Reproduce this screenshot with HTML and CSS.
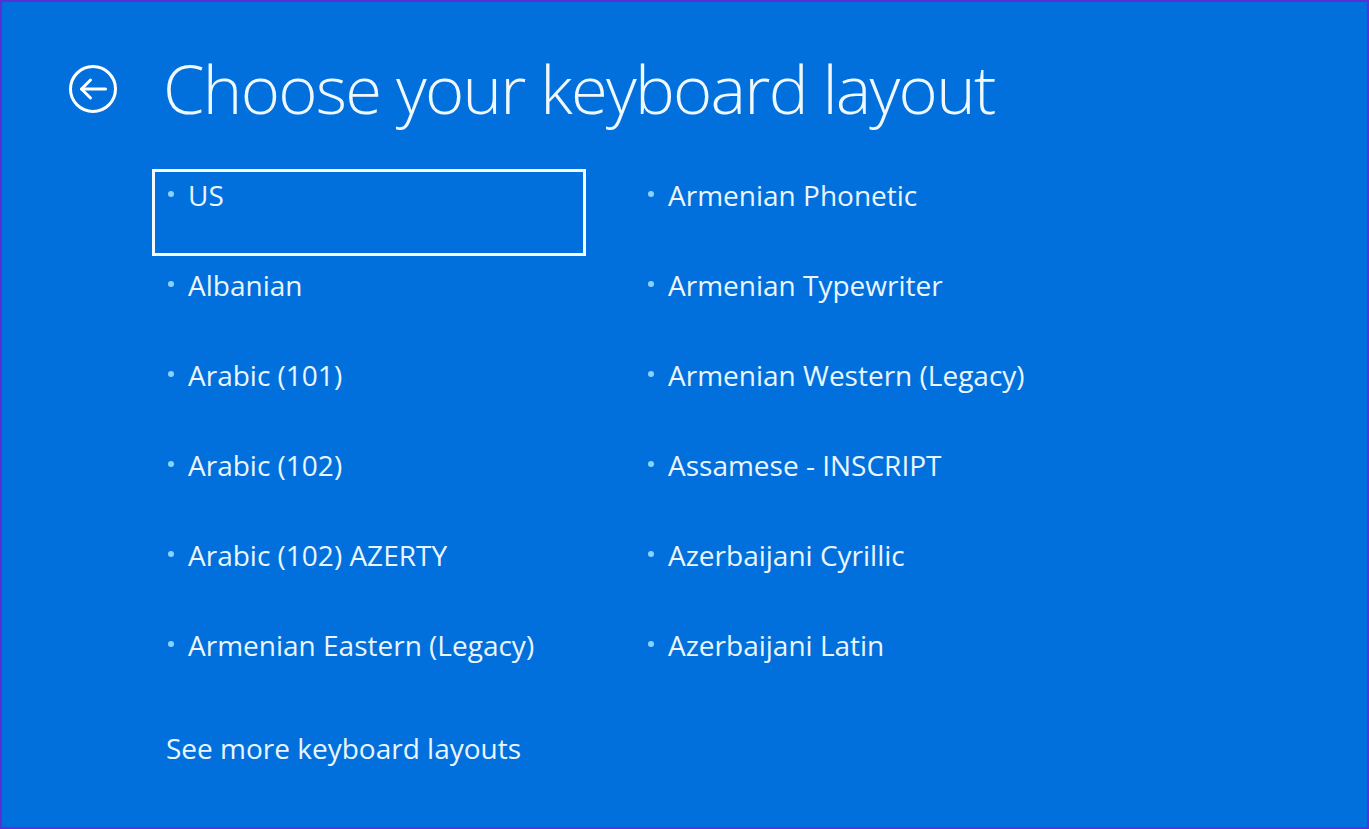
FILE: index.html
```html
<!DOCTYPE html>
<html lang="en">
<head>
<meta charset="utf-8">
<title>Choose your keyboard layout</title>
<link rel="stylesheet" href="styles.css">
</head>
<body>
<div class="screen">
  <header class="header">
    <button class="back" aria-label="Back">
      <svg width="50" height="50" viewBox="0 0 50 50" fill="none" stroke="#ffffff" stroke-width="3" stroke-linecap="round" stroke-linejoin="round">
        <circle cx="25" cy="25" r="22.5"/>
        <path d="M13.5 25 H37.5"/>
        <path d="M22.5 16 L13.5 25 L22.5 34"/>
      </svg>
    </button>
    <h1 class="title">Choose your keyboard layout</h1>
  </header>
  <ul class="layouts">
    <li class="item selected"><span class="dot"></span>US</li>
    <li class="item"><span class="dot"></span>Armenian Phonetic</li>
    <li class="item"><span class="dot"></span>Albanian</li>
    <li class="item"><span class="dot"></span>Armenian Typewriter</li>
    <li class="item"><span class="dot"></span>Arabic (101)</li>
    <li class="item"><span class="dot"></span>Armenian Western (Legacy)</li>
    <li class="item"><span class="dot"></span>Arabic (102)</li>
    <li class="item"><span class="dot"></span>Assamese - INSCRIPT</li>
    <li class="item"><span class="dot"></span>Arabic (102) AZERTY</li>
    <li class="item"><span class="dot"></span>Azerbaijani Cyrillic</li>
    <li class="item"><span class="dot"></span>Armenian Eastern (Legacy)</li>
    <li class="item"><span class="dot"></span>Azerbaijani Latin</li>
  </ul>
  <a class="more" href="#">See more keyboard layouts</a>
</div>
</body>
</html>
```

FILE: styles.css
```css
* { box-sizing: border-box; }
html, body {
  margin: 0;
  padding: 0;
  background: #5a2fd6;
}
.screen {
  width: 1369px;
  height: 829px;
  border-top: 2px solid #5a2fd6;
  border-left: 2px solid #5a2fd6;
  border-right: 2px solid #6a28d8;
  border-bottom: 2px solid #6a28d8;
  background: #0170dc;
  font-family: "Open Sans", "Noto Sans", sans-serif;
  color: #eaf6ff;
  display: flex;
  flex-direction: column;
  padding-left: 150px;
}
.header {
  display: flex;
  align-items: center;
  margin-left: -84px;
  height: 167px;
  padding-top: 6px;
}
.back {
  background: none;
  border: 0;
  padding: 0;
  width: 50px;
  height: 50px;
  display: flex;
  margin-right: 45px;
}
.title {
  margin: 0;
  font-weight: 300;
  font-size: 67px;
  letter-spacing: -1.75px;
  color: #f0f8ff;
  line-height: 1;
}
.layouts {
  list-style: none;
  margin: 0;
  padding: 0;
  display: grid;
  grid-template-columns: 434px 434px;
  grid-auto-rows: 87px;
  column-gap: 46px;
  row-gap: 3px;
}
.item {
  display: flex;
  align-items: flex-start;
  height: 87px;
  padding: 5px 0 0 13px;
  font-size: 28px;
  line-height: 36px;
  border: 3px solid transparent;
}
.item.selected {
  border-color: #f4faff;
}
.dot {
  flex: none;
  width: 6px;
  height: 6px;
  border-radius: 50%;
  background: #86d4ff;
  margin-right: 14px;
  margin-top: 14px;
}
.more {
  margin-top: 23px;
  margin-left: 14px;
  font-size: 28px;
  line-height: 38px;
  color: #eaf6ff;
  text-decoration: none;
}
```
